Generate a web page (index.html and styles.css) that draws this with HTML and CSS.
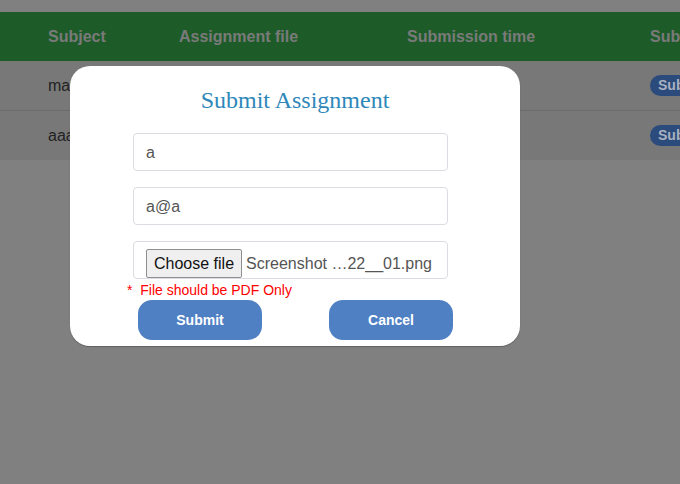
FILE: index.html
```html
<!DOCTYPE html>
<html>
<head>
<meta charset="utf-8">
<link rel="stylesheet" href="styles.css">
</head>
<body>
<div class="page">
  <div class="table">
    <div class="row head">
      <div class="c c1">Subject</div>
      <div class="c c2">Assignment file</div>
      <div class="c c3">Submission time</div>
      <div class="c c4">Submitted</div>
    </div>
    <div class="row body-row">
      <div class="c c1">maths</div>
      <div class="c c2"></div>
      <div class="c c3"></div>
      <div class="c c4"><span class="badge">Submitted</span></div>
    </div>
    <div class="row body-row last">
      <div class="c c1">aaa</div>
      <div class="c c2"></div>
      <div class="c c3"></div>
      <div class="c c4"><span class="badge">Submitted</span></div>
    </div>
  </div>
</div>

<div class="modal">
  <h2 class="title">Submit Assignment</h2>
  <div class="field"><span class="val">a</span></div>
  <div class="field"><span class="val">a@a</span></div>
  <div class="field file">
    <span class="file-btn">Choose file</span>
    <span class="file-name">Screenshot …22__01.png</span>
  </div>
  <div class="error">*&nbsp;&nbsp;File should be PDF Only</div>
  <div class="actions">
    <button class="btn">Submit</button>
    <button class="btn">Cancel</button>
  </div>
</div>
</body>
</html>
```

FILE: styles.css
```css
html, body {
  margin: 0;
  padding: 0;
  width: 680px;
  height: 484px;
  overflow: hidden;
  background: #808080;
  font-family: "Liberation Sans", Arial, sans-serif;
}

.page {
  padding-top: 12px;
}

.table {
  width: 100%;
}

.row {
  display: flex;
  align-items: center;
  padding-left: 48px;
  white-space: nowrap;
}

.head {
  height: 49px;
  background: #1d5c29;
  color: #7a7a7a;
  font-weight: bold;
  font-size: 16px;
}

.body-row {
  height: 49px;
  background: #787878;
  border-bottom: 1px solid #6c6c6c;
  color: #222;
  font-size: 16px;
}

.body-row.last {
  border-bottom: none;
}

.c1 { width: 131px; flex: none; }
.c2 { width: 228px; flex: none; }
.c3 { width: 243px; flex: none; }
.c4 { flex: none; }

.badge {
  display: inline-block;
  background: #2b4b7c;
  color: #a9b1bf;
  font-weight: bold;
  font-size: 14px;
  line-height: 21px;
  padding: 0 8px;
  border-radius: 11px;
}

.modal {
  position: absolute;
  left: 70px;
  top: 66px;
  width: 450px;
  height: 280px;
  box-sizing: border-box;
  background: #fff;
  border-radius: 20px;
  box-shadow: 0 1px 1px rgba(0,0,0,0.25);
  padding-top: 21px;
}

.title {
  margin: 0 0 19px;
  text-align: center;
  font-family: "Liberation Serif", "Times New Roman", serif;
  font-weight: normal;
  font-size: 24px;
  line-height: 27px;
  color: #2e87b9;
}

.field {
  margin-left: 63px;
  width: 315px;
  height: 38px;
  box-sizing: border-box;
  border: 1px solid #dcdde3;
  border-radius: 4px;
  margin-bottom: 16px;
  display: flex;
  align-items: center;
  padding-left: 12px;
  padding-top: 1px;
  font-size: 16px;
  color: #555;
}

.field.file {
  margin-bottom: 0;
  align-items: flex-end;
  padding-top: 0;
  padding-bottom: 0;
}

.file-btn {
  display: inline-block;
  box-sizing: border-box;
  height: 29px;
  line-height: 27px;
  padding: 0 7px;
  background: #efefef;
  border: 1px solid #8f8f8f;
  border-radius: 2px;
  color: #111;
  font-size: 16px;
  margin-right: 4px;
}

.file-name {
  line-height: 29px;
  color: #555;
}

.error {
  margin-left: 57px;
  margin-top: 3px;
  font-size: 14px;
  line-height: 16px;
  color: #f00;
}

.actions {
  display: flex;
  justify-content: space-between;
  margin: 2px 67px 0 68px;
}

.btn {
  width: 124px;
  height: 40px;
  border: none;
  border-radius: 14px;
  background: #4f80c4;
  color: #fff;
  font-family: "Liberation Sans", Arial, sans-serif;
  font-weight: bold;
  font-size: 14px;
  padding: 0;
}
```
